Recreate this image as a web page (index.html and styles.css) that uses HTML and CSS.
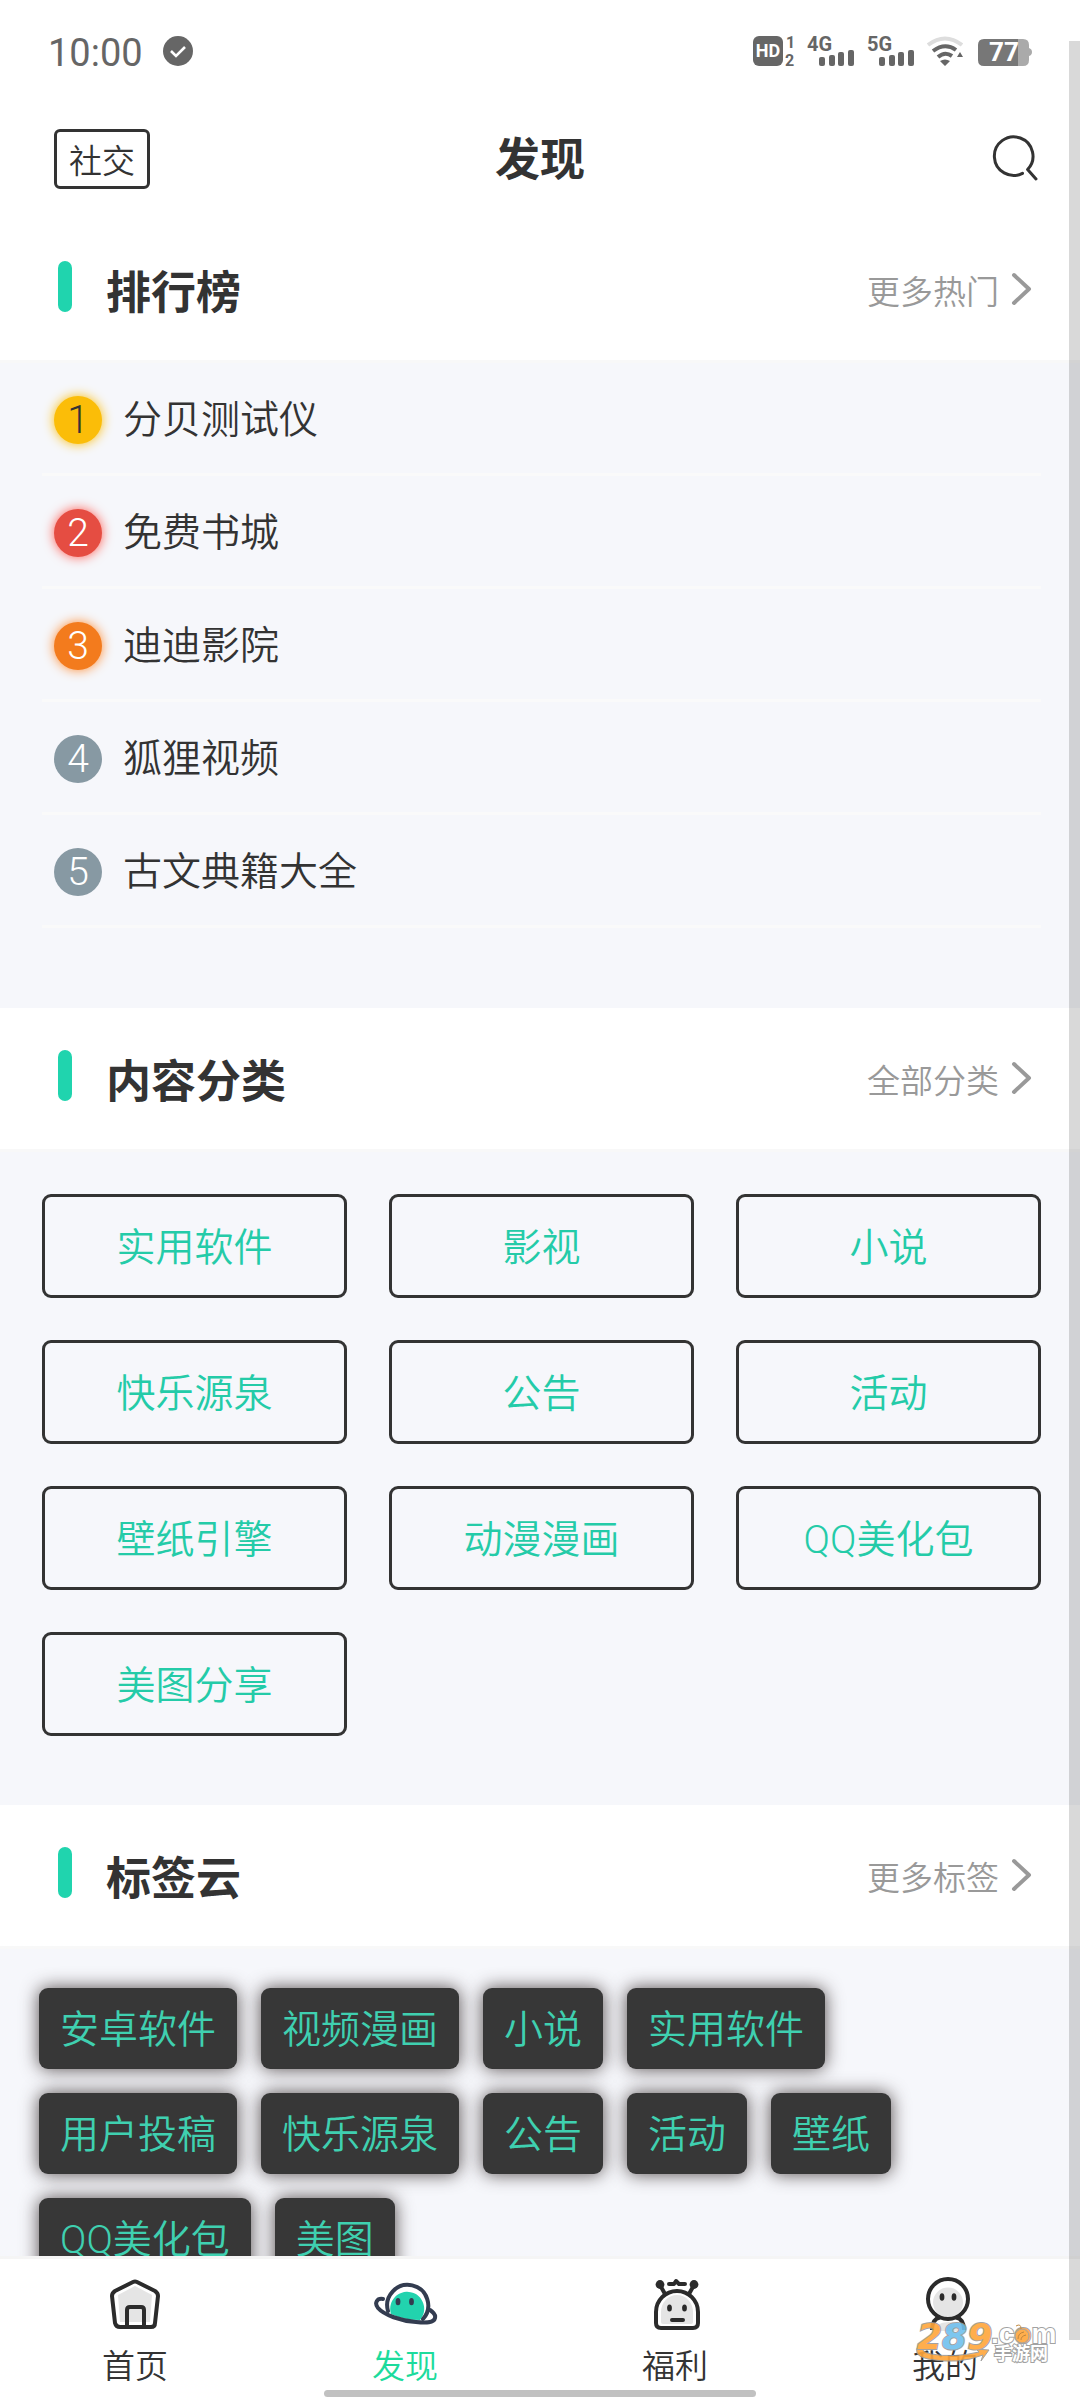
FILE: index.html
```html
<!DOCTYPE html>
<html lang="zh-CN">

<head>
    <meta charset="UTF-8">
    <meta name="viewport" content="width=device-width, initial-scale=1.0">
    <title>发现</title>
    <link rel="stylesheet" href="styles.css">
</head>

<body>
    <div class="app">
        <div class="status-bar">
            <span class="status-time">10:00</span>
            <svg width="30" height="30" viewBox="0 0 30 30">
                <circle cx="15" cy="15" r="15" fill="#666" />
                <path d="M8 15l5 5 9-9" fill="none" stroke="#fff" stroke-width="2.6" />
            </svg>
            <div class="status-icons">
                <svg width="42" height="30" viewBox="0 0 42 30">
                    <rect width="30" height="30" rx="6" fill="#666" />
                    <text class="hd-text" x="15" y="21" text-anchor="middle">HD</text>
                    <text class="sim-text" x="33" y="12">1</text>
                    <text class="sim-text" x="32" y="30">2</text>
                </svg>
                <svg width="48" height="30" viewBox="0 0 48 30" fill="#666">
                    <text class="net-text" x="0" y="15">4G</text>
                    <rect x="12" y="21" width="6" height="9" rx="2" />
                    <rect x="22" y="19" width="6" height="11" rx="2" />
                    <rect x="31" y="16" width="6" height="14" rx="2" />
                    <rect x="41" y="14" width="6" height="16" rx="2" />
                </svg>
                <svg width="48" height="30" viewBox="0 0 48 30" fill="#666">
                    <text class="net-text" x="0" y="15">5G</text>
                    <rect x="12" y="21" width="6" height="9" rx="2" />
                    <rect x="22" y="19" width="6" height="11" rx="2" />
                    <rect x="31" y="16" width="6" height="14" rx="2" />
                    <rect x="41" y="14" width="6" height="16" rx="2" />
                </svg>
                <svg width="36" height="30" viewBox="0 0 36 30" fill="none">
                    <path d="M1 9Q18-4 35 9" stroke="#ddd" stroke-width="4" />
                    <path d="M6 15Q18 6 29 14M11 21Q18 15 25 20" stroke="#666" stroke-width="4" />
                    <path d="M13 25Q18 22 23 25L18 30zM30 21l3-5 3 5z" fill="#666" />
                </svg>
                <svg width="57" height="30" viewBox="0 0 57 30">
                    <path d="M10 3H48Q54 3 54 9V12Q57 13 57 16T54 20V24Q54 30 48 30H10z" fill="#aaa" />
                    <path d="M43 3H9Q3 3 3 9V24Q3 30 9 30H43z" fill="#777" />
                    <text class="battery-text" x="29" y="25" text-anchor="middle">77</text>
                </svg>
            </div>
        </div>

        <header class="app-header">
            <button class="social-button" type="button">社交</button>
            <h1 class="app-title">发现</h1>
            <button class="search-button" type="button" aria-label="搜索">
                <svg width="48" height="48" viewBox="0 0 48 48" fill="none" stroke="#333" stroke-width="3"
                    stroke-linecap="round" stroke-linejoin="round">
                    <path d="M32.5 38.3A19.3 19.3 0 1 1 37.6 34.5L46 44" />
                </svg>
            </button>
        </header>

        <main class="content">
            <section>
                <div class="section-head">
                    <h2>排行榜</h2>
                    <a class="more-link" href="#rank">更多热门
                        <svg width="21" height="36" viewBox="0 0 21 36">
                            <path d="M3 3L18 17L3 31" />
                        </svg>
                    </a>
                </div>
                <ol class="rank-list">
                    <li><span class="rank-badge first">1</span>分贝测试仪</li>
                    <li><span class="rank-badge second">2</span>免费书城</li>
                    <li><span class="rank-badge third">3</span>迪迪影院</li>
                    <li><span class="rank-badge">4</span>狐狸视频</li>
                    <li><span class="rank-badge">5</span>古文典籍大全</li>
                </ol>
            </section>

            <section>
                <div class="section-head">
                    <h2>内容分类</h2>
                    <a class="more-link" href="#category">全部分类
                        <svg width="21" height="36" viewBox="0 0 21 36">
                            <path d="M3 3L18 17L3 31" />
                        </svg>
                    </a>
                </div>
                <div class="category-grid">
                    <button type="button">实用软件</button>
                    <button type="button">影视</button>
                    <button type="button">小说</button>
                    <button type="button">快乐源泉</button>
                    <button type="button">公告</button>
                    <button type="button">活动</button>
                    <button type="button">壁纸引擎</button>
                    <button type="button">动漫漫画</button>
                    <button type="button">QQ美化包</button>
                    <button type="button">美图分享</button>
                </div>
            </section>

            <section>
                <div class="section-head">
                    <h2>标签云</h2>
                    <a class="more-link" href="#tags">更多标签
                        <svg width="21" height="36" viewBox="0 0 21 36">
                            <path d="M3 3L18 17L3 31" />
                        </svg>
                    </a>
                </div>
                <div class="tag-cloud">
                    <a href="#tag">安卓软件</a>
                    <a href="#tag">视频漫画</a>
                    <a href="#tag">小说</a>
                    <a href="#tag">实用软件</a>
                    <a href="#tag">用户投稿</a>
                    <a href="#tag">快乐源泉</a>
                    <a href="#tag">公告</a>
                    <a href="#tag">活动</a>
                    <a href="#tag">壁纸</a>
                    <a href="#tag">QQ美化包</a>
                    <a href="#tag">美图</a>
                </div>
            </section>
        </main>

        <nav class="tab-bar">
            <a href="#home">
                <svg width="54" height="54" viewBox="0 0 54 54" fill="none" stroke="#2b2b2b" stroke-width="4"
                    stroke-linejoin="round">
                    <path d="M27 9L44 18L42 45H12L10 18z" fill="#e5e5e5" stroke="none" />
                    <path d="M25 5Q27 4 29 5L47 14Q50 16 50 19L47 46Q47 50 43 50H12Q8 50 7 46L4 19Q4 16 7 14z" />
                    <path d="M19 50V33Q19 30 22 30H33Q36 30 36 33V50" />
                </svg>
                首页
            </a>
            <a class="active" href="#discover">
                <svg width="66" height="54" viewBox="0 0 66 54" fill="none" stroke="#333c50" stroke-width="4"
                    stroke-linecap="round">
                    <path d="M19 37A17 17 0 1 1 48 43Q32 43 19 37z" fill="#22d3ae" stroke="none" />
                    <path d="M16 34A20.5 20.5 0 1 1 51 42" />
                    <path d="M11 22C5 21 2 26 6 31C12 38 29 44 44 45C54 46 62 46 63 41Q64 37 58 33" />
                    <ellipse cx="26" cy="24.7" rx="2.4" ry="3.6" fill="#333c50" stroke="none" />
                    <ellipse cx="39.5" cy="24.7" rx="2.4" ry="3.6" fill="#333c50" stroke="none" />
                </svg>
                发现
            </a>
            <a href="#welfare">
                <svg width="54" height="54" viewBox="0 0 54 54" fill="none" stroke="#2b2b2b" stroke-width="4"
                    stroke-linecap="round" stroke-linejoin="round">
                    <path d="M13 45V35A16 17 0 0 1 45 35V45Q45 47 43 47H15Q13 47 13 45z" fill="#e5e5e5" stroke="none" />
                    <path d="M8 35A21 21 0 0 1 50 35V46Q50 51 45 51H13Q8 51 8 46z" />
                    <path d="M12 8L17 17M46 8L41 17M21 7H26L28 4L31 7H37M24 43H35" />
                    <circle cx="12" cy="7.5" r="4.4" fill="#2b2b2b" stroke="none" />
                    <circle cx="46" cy="7.5" r="4.4" fill="#2b2b2b" stroke="none" />
                    <ellipse cx="21.5" cy="31" rx="2.4" ry="3.6" fill="#2b2b2b" stroke="none" />
                    <ellipse cx="36.5" cy="31" rx="2.4" ry="3.6" fill="#2b2b2b" stroke="none" />
                </svg>
                福利
            </a>
            <a href="#mine">
                <svg width="54" height="54" viewBox="0 0 54 54" fill="none" stroke="#2b2b2b" stroke-width="4">
                    <path d="M19 54V48Q30 42 43 48V54z" fill="#e5e5e5" stroke="none" />
                    <circle cx="30" cy="25.5" r="15" fill="#e5e5e5" stroke="none" />
                    <circle cx="30" cy="22" r="20" />
                    <path d="M14 53Q14 42 22 40.500M46 53Q46 42 38 40.500" />
                    <ellipse cx="24" cy="20" rx="2.4" ry="3.8" fill="#2b2b2b" stroke="none" />
                    <ellipse cx="36" cy="20" rx="2.4" ry="3.8" fill="#2b2b2b" stroke="none" />
                </svg>
                我的
            </a>
        </nav>

        <div class="home-indicator"></div>
        <div class="scroll-thumb"></div>

        <svg class="site-mark" width="142" height="42" viewBox="0 0 142 42">
            <path d="M5 22Q-3 34 14 37Q44 43 69 33L67 39L75 28L62 27L65 30Q40 36 17 32Q6 30 8 22z" fill="#ffa63a"
                stroke="#999" />
            <text class="mark-number" x="3" y="27"><tspan>2</tspan><tspan fill="#6fc0ee">8</tspan><tspan>9</tspan></text>
            <text class="mark-domain" x="77" y="21">.c<tspan fill="#ffa63a">o</tspan>m</text>
            <circle cx="108" cy="14" r="7" fill="#ffa63a" stroke="#999" />
            <path d="M104 17Q104 11 110 10M107 18Q107 14 112 13M102 4Q107 1 107 7" fill="none" stroke="#b97a2a" />
            <text class="mark-name" x="80" y="38">手游网</text>
        </svg>
    </div>
</body>

</html>
```

FILE: styles.css
```css
* {
    box-sizing: border-box;
}

body {
    margin: 0;
    background-color: #fff;
    color: #333;
    font-family: "Noto Sans CJK SC", sans-serif;
    font-size: 39px;
    font-weight: 350;
}

h1,
h2,
ol {
    margin: 0;
    padding: 0;
}

h1,
h2 {
    font-size: 45px;
    font-weight: 700;
    line-height: 66px;
}

a {
    color: inherit;
    text-decoration: none;
}

button {
    padding: 0;
    background: none;
    color: inherit;
    font-family: inherit;
    font-weight: inherit;
    cursor: pointer;
}

.app {
    position: relative;
    display: flex;
    flex-direction: column;
    height: 100vh;
    overflow: hidden;
}

/* status bar */
.status-bar {
    display: flex;
    flex-shrink: 0;
    align-items: center;
    gap: 20px;
    height: 102px;
    padding: 0 48px;
}

.status-time {
    padding-top: 3px;
    color: #666;
    font-family: Roboto, sans-serif;
    font-size: 38px;
    font-weight: 400;
}

.status-icons {
    display: flex;
    gap: 12px;
    margin-left: auto;
}

.status-icons text {
    fill: #666;
    font-family: Roboto, sans-serif;
    font-weight: 700;
}

.status-icons .hd-text {
    fill: #fff;
    font-size: 18px;
}

.status-icons .sim-text {
    font-size: 16px;
}

.status-icons .net-text {
    font-size: 20px;
}

.status-icons .battery-text {
    fill: #fff;
    font-size: 26px;
}

/* header */
.app-header {
    display: grid;
    grid-template-columns: 1fr auto 1fr;
    flex-shrink: 0;
    align-items: start;
    padding: 27px 42px 30px;
}

.social-button {
    justify-self: start;
    width: 96px;
    height: 60px;
    margin-left: 12px;
    border: 3px solid #333;
    border-radius: 6px;
    font-size: 33px;
    line-height: 54px;
}

.app-title {
    line-height: 56px;
}

.search-button {
    display: flex;
    justify-self: end;
    padding: 6px 0;
    border: 0;
}

/* content */
.content {
    flex: 1;
    min-height: 0;
    overflow: hidden;
    background-color: #f6f7fb;
}

.section-head {
    display: flex;
    align-items: center;
    justify-content: space-between;
    height: 144px;
    padding: 0 48px 0 58px;
    border-bottom: 3px solid #f8f8f8;
    background-color: #fff;
}

.section-head h2 {
    display: flex;
    align-items: center;
    gap: 34px;
}

.section-head h2::before {
    content: "";
    width: 14px;
    height: 51px;
    margin-bottom: 6px;
    border-radius: 7px;
    background-color: #20d4ae;
}

.more-link {
    display: flex;
    align-items: center;
    gap: 12px;
    color: #999;
    font-size: 33px;
}

.more-link path {
    fill: none;
    stroke: #999;
    stroke-width: 4;
    stroke-linecap: round;
    stroke-linejoin: round;
}

.rank-list {
    padding: 0 39px 80px 42px;
    font-family: Roboto, "Noto Sans CJK SC", sans-serif;
    line-height: 48px;
    list-style: none;
}

.rank-list li {
    display: flex;
    align-items: center;
    gap: 21px;
    height: 113px;
    padding: 3px 0 0 12px;
    border-bottom: 3px solid #fafafa;
}

.rank-badge {
    width: 48px;
    height: 48px;
    border-radius: 50%;
    background-color: #8799a3;
    color: #fff;
    text-align: center;
}

.rank-badge.first {
    background-color: #fbbd08;
    box-shadow: 0 0 12px #fbbd08;
    color: #333;
}

.rank-badge.second {
    background-color: #e54d42;
    box-shadow: 0 0 12px #ff5a50;
}

.rank-badge.third {
    background-color: #f37b1d;
    box-shadow: 0 0 12px #ff8a30;
}

.category-grid {
    display: grid;
    grid-template-columns: repeat(3, 1fr);
    gap: 42px;
    padding: 42px 39px 69px 42px;
}

.category-grid button {
    height: 104px;
    padding-top: 4px;
    border: 3px solid #333;
    border-radius: 9px;
    color: #24cba8;
    font-family: Roboto, "Noto Sans CJK SC", sans-serif;
    font-size: 39px;
    line-height: 94px;
}

.tag-cloud {
    display: flex;
    flex-wrap: wrap;
    gap: 24px;
    padding: 39px;
    font-family: Roboto, "Noto Sans CJK SC", sans-serif;
}

.tag-cloud a {
    padding: 3px 21px 0;
    border-radius: 9px;
    background-color: #373737;
    box-shadow: 0 0 18px rgba(40, 30, 30, 0.8);
    color: #3fd0b0;
    line-height: 78px;
}

/* bottom navigation */
.tab-bar {
    display: grid;
    grid-template-columns: repeat(4, 1fr);
    flex-shrink: 0;
    height: 144px;
    border-top: 3px solid #f5f5f5;
    background-color: #fff;
}

.tab-bar a {
    display: flex;
    flex-direction: column;
    align-items: center;
    gap: 9px;
    padding-top: 18px;
    font-size: 33px;
    line-height: 48px;
}

.tab-bar .active {
    color: #1cdb9c;
}

/* overlays */
.home-indicator {
    position: absolute;
    bottom: 3px;
    left: 30%;
    width: 40%;
    height: 7px;
    border-radius: 4px;
    background-color: #c1c1c1;
}

.scroll-thumb {
    position: absolute;
    top: 41px;
    right: 0;
    bottom: 60px;
    width: 11px;
    background-color: rgba(0, 0, 0, 0.15);
}

.site-mark {
    position: absolute;
    right: 24px;
    bottom: 36px;
    opacity: 0.9;
}

.site-mark text {
    fill: #fff;
    stroke: #999;
    stroke-width: 2px;
    paint-order: stroke;
    font-weight: 700;
}

.site-mark .mark-number {
    fill: #ffa63a;
    font-family: "DejaVu Sans", sans-serif;
    font-size: 36px;
    font-style: italic;
}

.site-mark .mark-domain {
    font-family: "Liberation Sans", sans-serif;
    font-size: 28px;
}

.site-mark .mark-name {
    font-family: "Noto Sans CJK SC", sans-serif;
    font-size: 18px;
}
```
